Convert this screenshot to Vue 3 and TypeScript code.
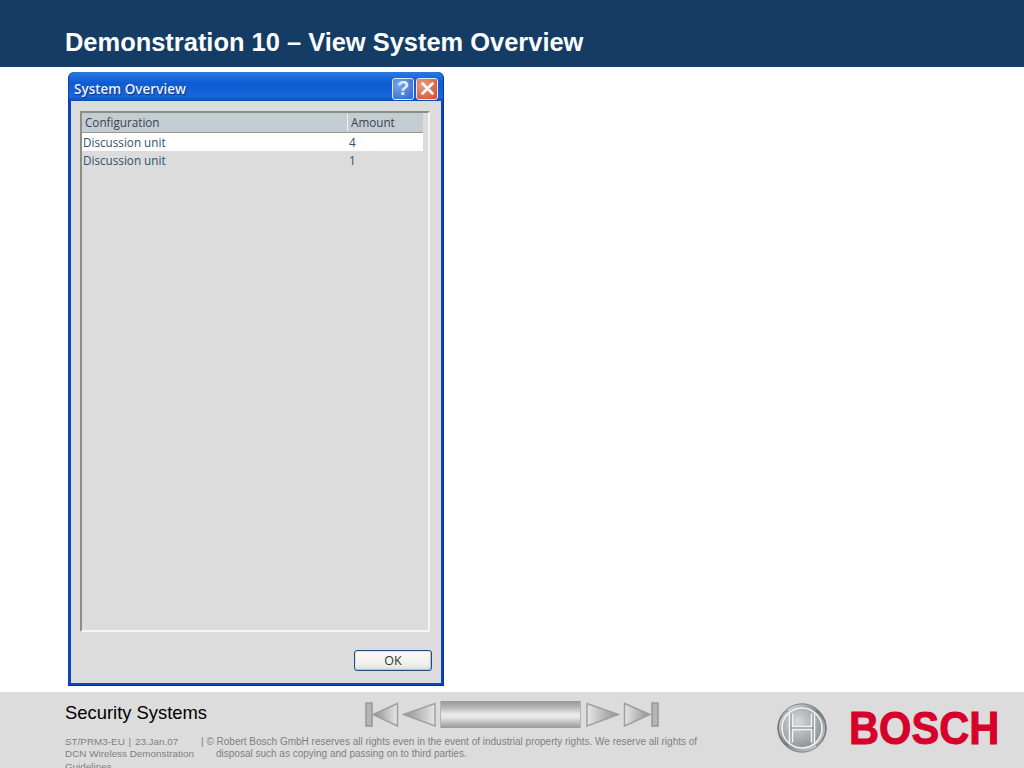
<script setup lang="ts">
const rows = [
  { name: 'Discussion unit', amount: '4', active: true },
  { name: 'Discussion unit', amount: '1', active: false },
]
const legal = '© Robert Bosch GmbH reserves all rights even in the event of industrial property rights. We reserve all rights of'
</script>

<template>
  <div class="page">
    <header class="header"><h1>Demonstration 10 – View System Overview</h1></header>
    <main class="main">
      <section class="dialog">
        <div class="titlebar">
          <span class="title">System Overview</span>
          <span class="caption-btn help">?</span>
          <span class="caption-btn close">
            <svg width="15" height="15" viewBox="0 0 15 15"><path d="M2.5 2.5l10 10M12.5 2.5l-10 10" stroke="#fff" stroke-width="2.6" stroke-linecap="round" /></svg>
          </span>
        </div>
        <div class="client">
          <div class="list">
            <div class="list-head">
              <span class="col-a">Configuration</span>
              <span class="col-b">Amount</span>
            </div>
            <div v-for="(r, i) in rows" :key="i" class="row" :class="{ active: r.active }">
              <span class="cell-a">{{ r.name }}</span>
              <span class="cell-b">{{ r.amount }}</span>
            </div>
          </div>
          <div class="actions"><button class="ok" type="button">OK</button></div>
        </div>
      </section>
    </main>
    <footer class="footer">
      <div class="foot-left">
        <div class="org">Security Systems</div>
        <div class="small">
          <div class="meta">ST/PRM3-EU <span class="sep">|</span> 23.Jan.07<br />DCN Wireless Demonstration Guidelines</div>
          <div class="legal"><span class="bar">|</span> {{ legal }}<br /><span class="indent">disposal such as copying and passing on to third parties.</span></div>
        </div>
      </div>
      <nav class="nav">
        <svg width="34" height="27" viewBox="0 0 34 27">
          <defs>
            <linearGradient id="gl" x1="0" x2="1" y1="0" y2="0"><stop offset="0" stop-color="#8f8f8f" /><stop offset="1" stop-color="#e6e6e6" /></linearGradient>
          </defs>
          <rect x="1" y="2" width="6" height="23" fill="#b5b5b5" stroke="#979797" stroke-width="1.5" />
          <path d="M8 13.5L32.5 2.5V25Z" fill="url(#gl)" stroke="#a0a0a0" stroke-width="1.5" />
        </svg>
        <svg width="34" height="27" viewBox="0 0 34 27">
          <path d="M1.5 13.5L33 2.5V25Z" fill="url(#gl)" stroke="#a0a0a0" stroke-width="1.5" />
        </svg>
        <div class="nav-bar"></div>
        <svg width="34" height="27" viewBox="0 0 34 27">
          <defs>
            <linearGradient id="gr" x1="0" x2="1" y1="0" y2="0"><stop offset="0" stop-color="#e6e6e6" /><stop offset="1" stop-color="#8f8f8f" /></linearGradient>
          </defs>
          <path d="M32.5 13.5L1 2.5V25Z" fill="url(#gr)" stroke="#a0a0a0" stroke-width="1.5" />
        </svg>
        <svg width="36" height="27" viewBox="0 0 36 27">
          <path d="M27 13.5L1.5 2.5V25Z" fill="url(#gr)" stroke="#a0a0a0" stroke-width="1.5" />
          <rect x="29" y="2" width="6" height="23" fill="#b5b5b5" stroke="#979797" stroke-width="1.5" />
        </svg>
      </nav>
      <svg class="emblem" width="50" height="52" viewBox="0 0 50 52">
        <defs>
          <linearGradient id="ring" x1="0" x2="1" y1="0" y2="1"><stop offset="0" stop-color="#eef0f1" /><stop offset=".5" stop-color="#7f868a" /><stop offset="1" stop-color="#dfe2e3" /></linearGradient>
          <radialGradient id="disc" cx=".4" cy=".35" r=".8"><stop offset="0" stop-color="#d5d9db" /><stop offset="1" stop-color="#7f878b" /></radialGradient>
        </defs>
        <circle cx="25" cy="26" r="24.2" fill="url(#ring)" stroke="#7d8488" />
        <circle cx="25" cy="26" r="20" fill="url(#disc)" stroke="#f1f2f3" stroke-width="1.5" />
        <path d="M14 11.5V40.5M36 11.5V40.5M14 26H36" fill="none" stroke="#f3f4f5" stroke-width="4.5" />
        <path d="M14 11.5V40.5M36 11.5V40.5M14 26H36" fill="none" stroke="#666e73" stroke-width="1" />
        <path d="M11 8.5A20.5 20.5 0 0 0 11 43.5M39 8.5A20.5 20.5 0 0 1 39 43.5" fill="none" stroke="#666e73" stroke-width="1" />
      </svg>
      <div class="wordmark">BOSCH</div>
    </footer>
  </div>
</template>

<style>
html, body { margin: 0; background: #fff; }
</style>

<style scoped>
.page {
  width: 1024px;
  height: 768px;
  display: flex;
  flex-direction: column;
  overflow: hidden;
  font-family: "Liberation Sans", Arial, sans-serif;
}
.header {
  height: 67px;
  flex: none;
  background: #143c64;
  display: flex;
  align-items: center;
  padding-left: 65px;
  padding-top: 17px;
  box-sizing: border-box;
}
.header h1 {
  margin: 0;
  color: #fff;
  font-size: 25.45px;
  font-weight: 700;
  line-height: 30px;
}
.main {
  flex: 1;
  min-height: 0;
  padding: 5px 0 0 68px;
}
.dialog {
  width: 376px;
  height: 614px;
  box-sizing: border-box;
  display: flex;
  flex-direction: column;
  background: #0a46c0;
  border-radius: 6px 6px 0 0;
  padding: 0 2px 2px;
  border-bottom: 1px solid #0a2c90;
  border-left: 1px solid #0d3fb0;
  border-right: 1px solid #0a35a0;
}
.titlebar {
  height: 29px;
  box-sizing: border-box;
  flex: none;
  display: flex;
  align-items: center;
  gap: 2px;
  padding: 4px 5px 0 5px;
  background: linear-gradient(#2a78e0, #0e5bd2 40%, #1766dc 85%, #0c4cb6);
  margin: 0 -2px;
  border-radius: 6px 6px 0 0;
}
.title {
  flex: 1;
  color: #e8f0fa;
  font-family: "Open Sans", "Liberation Sans", sans-serif;
  font-size: 13.5px;
  font-weight: 600;
  text-shadow: 1px 1px 1px #0a2f80;
}
.caption-btn {
  width: 22px;
  height: 22px;
  box-sizing: border-box;
  border-radius: 3px;
  border: 1px solid #dfe8f5;
  display: flex;
  align-items: center;
  justify-content: center;
}
.help {
  background: radial-gradient(circle at 30% 30%, #7aa6ea, #2a64cf);
  color: #dfe9f8;
  font-size: 20px;
  font-weight: 700;
}
.close {
  background: radial-gradient(circle at 30% 30%, #ee9a80, #d1492a);
}
.client {
  flex: 1;
  min-height: 0;
  background: #dcdcdc;
  display: flex;
  flex-direction: column;
  padding: 10px 11px 0 9px;
}
.list {
  height: 521px;
  flex: none;
  box-sizing: border-box;
  background: #dcdcdc;
  border: 2px solid;
  border-color: #8e8e86 #f6f6f4 #f6f6f4 #8e8e86;
  padding: 0 5px 0 0;
  font-family: "Open Sans", "Liberation Sans", sans-serif;
  font-size: 11.7px;
  color: #30506c;
}
.list-head {
  height: 20px;
  box-sizing: border-box;
  display: flex;
  align-items: center;
  background: #c4ccd4;
  border-bottom: 1px solid #9a9a8c;
  color: #39424c;
}
.col-a { width: 266px; padding-left: 3px; box-sizing: border-box; border-right: 1px solid #eef0f2; line-height: 17px; }
.col-b { padding-left: 3px; line-height: 17px; }
.row {
  height: 18px;
  display: flex;
  align-items: center;
}
.row.active { background: #fff; }
.cell-a { width: 266px; padding-left: 1px; box-sizing: border-box; }
.cell-b { padding-left: 1px; }
.actions {
  flex: 1;
  display: flex;
  justify-content: flex-end;
  align-items: flex-start;
  padding-top: 18px;
  margin-right: -2px;
}
.ok {
  width: 78px;
  height: 21px;
  padding: 0;
  border: 1.5px solid #1f4d78;
  border-radius: 3px;
  background: linear-gradient(#fbfbf8, #f0efe9 70%, #d8dde6);
  box-shadow: inset -1px -1px 1px #a9c3e2, inset 1px 1px 1px #cfe0f2;
  color: #2f3336;
  font-family: "Open Sans", "Liberation Sans", sans-serif;
  font-size: 12.5px;
}
.footer {
  position: relative;
  height: 76px;
  flex: none;
  background: #dcdcdc;
  display: flex;
  overflow: hidden;
}
.foot-left {
  width: 0;
  flex: none;
}
.org {
  margin: 11px 0 0 65px;
  width: 250px;
  font-size: 18.4px;
  line-height: 20px;
  color: #000;
}
.small {
  display: flex;
  margin: 13px 0 0 65px;
  width: 660px;
  font-size: 9.9px;
  line-height: 12.3px;
  color: #808080;
}
.meta { width: 136px; flex: none; }
.sep { margin: 0 1px; }
.legal { flex: 1; white-space: nowrap; font-size: 10px; }
.indent { padding-left: 15px; }
.bar { margin-right: 0; }
.nav {
  display: flex;
  align-items: center;
  gap: 3px;
  margin: 9px 0 0 365px;
  height: 27px;
}
.nav-bar {
  width: 141px;
  height: 27px;
  margin: 0 2px 0 1px;
  background: linear-gradient(#989898, #b8b8b8 25%, #ececec 50%, #e4e4e4 62%, #a6a6a6 92%, #9a9a9a);
  border-left: 1px solid #b4b4b4;
  border-right: 1px solid #b4b4b4;
  box-sizing: border-box;
}
.emblem {
  position: absolute;
  left: 777px;
  top: 10px;
}
.wordmark {
  position: absolute;
  left: 849px;
  top: 9px;
  width: 170px;
  transform-origin: 0 50%;
  transform: scaleX(0.885);
  font-size: 47px;
  line-height: 54px;
  font-weight: 700;
  color: #d6002b;
  -webkit-text-stroke: 1px #d6002b;
}
</style>
